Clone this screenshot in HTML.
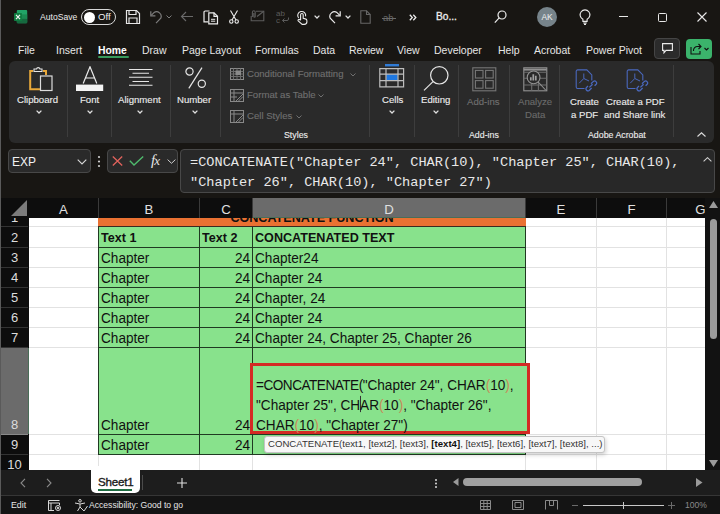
<!DOCTYPE html>
<html><head><meta charset="utf-8">
<style>
*{margin:0;padding:0;box-sizing:border-box}
html,body{width:720px;height:514px;overflow:hidden;background:#181613;font-family:"Liberation Sans",sans-serif;color:#e8e8e8}
.a{position:absolute}
.t{position:absolute;white-space:nowrap;line-height:1}
#win{position:absolute;left:0;top:0;width:720px;height:514px;overflow:hidden}
.tab{position:absolute;top:44px;font-size:10.5px;color:#e6e6e6;white-space:nowrap;line-height:12px}
.rib{position:absolute;left:9px;top:61px;width:705px;height:82px;background:#2a2a2a;border-radius:6px}
.sep{position:absolute;width:1px;background:#3d3d3d;top:65px;height:72px}
.rl{position:absolute;font-size:9.6px;color:#ececec;-webkit-text-stroke:0.12px currentColor;white-space:nowrap;line-height:12px;text-align:center}
.dim{color:#7a7a7a}
.chev{position:absolute;width:5px;height:5px;border-right:1px solid #cfcfcf;border-bottom:1px solid #cfcfcf;transform:rotate(45deg)}
/* grid */
.ch{position:absolute;top:198px;height:20px;background:#0d0d0d;color:#e0e0e0;font-size:13.2px;text-align:center;line-height:23px}
.rh{position:absolute;left:1px;width:27px;background:#0d0d0d;color:#dcdcdc;font-size:13px;text-align:center;border-bottom:1px solid #333;line-height:19px;display:flex;align-items:flex-end;justify-content:center}
.cell{position:absolute;font-size:13.6px;color:#111;white-space:nowrap;line-height:20px;margin-top:1px;transform:scaleY(1.08);transform-origin:0 14.7px}
.cell.b{font-weight:bold;font-size:12.6px;margin-top:0}
.cell.r{text-align:right}
.p{color:#c98a5a}
</style></head><body><div id="win">
<!-- left window border -->
<div class="a" style="left:0;top:0;width:1px;height:514px;background:#5a5a5a"></div>

<!-- ===== TITLE BAR ===== -->
<svg class="a" style="left:13px;top:9px" width="16" height="17" viewBox="0 0 16 17">
 <rect x="3.8" y="1" width="10.4" height="13.2" rx="1" fill="#21a366"/>
 <rect x="3.8" y="5.4" width="10.4" height="4.4" fill="#1b8a52"/>
 <rect x="3.8" y="9.8" width="10.4" height="4.4" rx="1" fill="#16693f"/>
 <rect x="1" y="4" width="8" height="8" rx="0.8" fill="#107c41"/>
 <path d="M3 5.8 L7 10.2 M7 5.8 L3 10.2" stroke="#f4f4f4" stroke-width="1.2"/>
</svg>
<div class="t" style="left:40px;top:13px;font-size:8.6px;color:#ececec">AutoSave</div>
<div class="a" style="left:81px;top:9px;width:35px;height:16px;border:1.2px solid #d8d8d8;border-radius:8px"></div>
<div class="a" style="left:84px;top:11.5px;width:11px;height:11px;background:#fff;border-radius:50%"></div>
<div class="t" style="left:98px;top:12px;font-size:9.6px;color:#f0f0f0">Off</div>
<!-- save -->
<svg class="a" style="left:125px;top:9px" width="16" height="16" viewBox="0 0 16 16" fill="none" stroke="#e6e6e6" stroke-width="1.2">
 <path d="M1.5 1.5 H11.5 L14.5 4.5 V14.5 H1.5 Z"/><path d="M4 1.5 V5.5 H11 V1.5"/><path d="M4 14.5 V9 H12 V14.5"/>
</svg>
<!-- undo dim -->
<svg class="a" style="left:149px;top:10px" width="14" height="14" viewBox="0 0 14 14" fill="none" stroke="#7d7d7d" stroke-width="1.2">
 <path d="M7 13.2 L11.8 8.2 A4.6 4.6 0 0 0 5 2.6 L2.4 5.2"/><path d="M1.8 1.2 V5.8 H6.4"/>
</svg>
<svg class="a" style="left:166px;top:15px" width="6" height="4"><path d="M0.5 0.5 L3 3 L5.5 0.5" stroke="#7d7d7d" fill="none"/></svg>
<!-- back arrow dim -->
<svg class="a" style="left:180px;top:10px" width="14" height="13" viewBox="0 0 14 13" fill="none" stroke="#6a6a6a" stroke-width="1.1">
 <path d="M13 6.5 H1.5 M6 2 L1.5 6.5 L6 11"/>
</svg>
<!-- copy -->
<svg class="a" style="left:203px;top:10px" width="16" height="15" viewBox="0 0 16 15" fill="none" stroke="#ececec" stroke-width="1.2">
 <path d="M6.5 1 H2.2 A1.2 1.2 0 0 0 1 2.2 V11.8 H5"/>
 <path d="M5.8 2.8 H11 L14.5 6.3 V13.8 H5.8 Z" fill="#181613"/><path d="M11 2.8 V6.3 H14.5"/><path d="M8 9.3 H12.2 M8 11.2 H12.2" stroke-width="1"/>
</svg>
<!-- scissors -->
<svg class="a" style="left:229px;top:10px" width="10" height="14" viewBox="0 0 10 14" fill="none" stroke="#ececec" stroke-width="1.1">
 <path d="M1.5 0.5 L7 10 M8.5 0.5 L3 10"/><circle cx="2.3" cy="11.5" r="1.7"/><circle cx="7.7" cy="11.5" r="1.7"/>
</svg>
<!-- mail dim -->
<svg class="a" style="left:250px;top:10px" width="15" height="12" viewBox="0 0 15 12" fill="none" stroke="#5c5c5c" stroke-width="1.1">
 <path d="M1.2 6 V10.8 H13.8 V1.2 H6"/><path d="M13.8 1.2 L7 6.5"/><path d="M2.4 7 V2.2 A1.4 1.4 0 0 1 5.2 2.2 V6.5 A0.7 0.7 0 0 1 3.8 6.5 V3"/>
</svg>
<!-- abc dim -->
<svg class="a" style="left:276px;top:9px" width="14" height="14" viewBox="0 0 14 14" fill="none" stroke="#5c5c5c" stroke-width="1">
 <text x="0" y="7" font-size="8" font-family="Liberation Sans" fill="#5c5c5c" stroke="none">ab</text>
 <text x="0" y="13.8" font-size="8" font-family="Liberation Sans" fill="#5c5c5c" stroke="none">c</text>
 <path d="M12.5 8.5 V10 A1.5 1.5 0 0 1 11 11.5 H6.5 M8.5 9.5 L6.5 11.5 L8.5 13.5"/>
</svg>
<!-- touch -->
<svg class="a" style="left:296px;top:10px" width="12" height="15" viewBox="0 0 12 15" fill="none" stroke="#ececec" stroke-width="1.1">
 <path d="M2.6 8 A4 4 0 1 1 9.6 6.4"/>
 <path d="M4.6 10 V4.8 A1.3 1.3 0 0 1 7.2 4.8 V8.4 L9.4 8.9 A1.8 1.8 0 0 1 10.9 10.7 V11.8 A2.6 2.6 0 0 1 8.3 14.4 H6.2 L2.2 10.9 A1 1 0 0 1 3.6 9.5 L4.6 10.4"/>
</svg>
<svg class="a" style="left:314px;top:15px" width="6" height="4"><path d="M0.6 0.6 L3 3 L5.4 0.6" stroke="#e0e0e0" fill="none" stroke-width="1.3"/></svg>
<!-- redo -->
<svg class="a" style="left:328px;top:10px" width="14" height="14" viewBox="0 0 14 14" fill="none" stroke="#ececec" stroke-width="1.2">
 <path d="M7 13.2 L2.2 8.2 A4.6 4.6 0 0 1 9 2.6 L11.6 5.2"/><path d="M12.2 1.2 V5.8 H7.6"/>
</svg>
<svg class="a" style="left:345px;top:15px" width="6" height="4"><path d="M0.6 0.6 L3 3 L5.4 0.6" stroke="#e0e0e0" fill="none" stroke-width="1.3"/></svg>
<!-- doc dim -->
<svg class="a" style="left:360px;top:10px" width="11" height="14" viewBox="0 0 11 14" fill="none" stroke="#666" stroke-width="1.1">
 <path d="M0.8 0.8 H6.5 L10.2 4.5 V13.2 H0.8 Z"/><path d="M6.5 0.8 V4.5 H10.2"/>
</svg>
<!-- ab strike dim -->
<div class="t" style="left:383px;top:13px;font-size:9.5px;color:#6a6a6a">ab</div>
<div class="a" style="left:382px;top:18px;width:14px;height:1px;background:#6a6a6a"></div>
<svg class="a" style="left:409px;top:14px" width="8" height="7"><path d="M0.8 0.8 L3.3 3.5 L0.8 6.2 M4.3 0.8 L6.8 3.5 L4.3 6.2" stroke="#ececec" fill="none" stroke-width="1.3"/></svg>
<div class="t" style="left:436px;top:12px;font-size:10.2px;color:#ececec;-webkit-text-stroke:0.3px #ececec">Bo...</div>
<!-- search -->
<svg class="a" style="left:494px;top:10px" width="13" height="14" viewBox="0 0 13 14" fill="none" stroke="#ececec" stroke-width="1.2">
 <circle cx="8" cy="5" r="4"/><path d="M5.2 7.9 L0.8 12.6"/>
</svg>
<!-- avatar -->
<div class="a" style="left:537px;top:7px;width:20px;height:20px;border-radius:50%;background:#76838a"></div>
<div class="t" style="left:537px;width:20px;text-align:center;top:13px;font-size:8.4px;color:#f0f0f0">AK</div>
<!-- bulb -->
<svg class="a" style="left:579px;top:9px" width="12" height="16" viewBox="0 0 12 16" fill="none" stroke="#ececec" stroke-width="1.1">
 <path d="M3.9 12.4 V10.2 A4.9 4.9 0 1 1 8.1 10.2 V12.4 Z"/><path d="M4.2 14 H7.8 M5 15.4 H7"/>
</svg>
<!-- window controls -->
<div class="a" style="left:619px;top:16px;width:9px;height:1px;background:#e8e8e8"></div>
<div class="a" style="left:658px;top:13px;width:9px;height:9px;border:1.2px solid #e8e8e8;border-radius:1.5px"></div>
<svg class="a" style="left:697px;top:12px" width="10" height="10" viewBox="0 0 10 10"><path d="M0.5 0.5 L9.5 9.5 M9.5 0.5 L0.5 9.5" stroke="#e8e8e8" stroke-width="1.1"/></svg>

<!-- ===== TABS ===== -->
<div class="tab" style="left:18px">File</div>
<div class="tab" style="left:56px">Insert</div>
<div class="tab" style="left:98px;color:#fff;font-size:10.4px;font-weight:bold;top:44.5px">Home</div>
<div class="a" style="left:98px;top:56px;width:31px;height:2px;background:#389a5c;border-radius:1px"></div>
<div class="tab" style="left:142px">Draw</div>
<div class="tab" style="left:182px">Page Layout</div>
<div class="tab" style="left:255px">Formulas</div>
<div class="tab" style="left:313px">Data</div>
<div class="tab" style="left:349px">Review</div>
<div class="tab" style="left:397px">View</div>
<div class="tab" style="left:434px">Developer</div>
<div class="tab" style="left:498px">Help</div>
<div class="tab" style="left:534px">Acrobat</div>
<div class="tab" style="left:586px">Power Pivot</div>
<div class="a" style="left:654px;top:38px;width:26px;height:21px;background:#2b2b2b;border:1px solid #454545;border-radius:4px"></div>
<svg class="a" style="left:662px;top:43px" width="11" height="11" viewBox="0 0 11 11" fill="none" stroke="#ececec" stroke-width="1.1">
 <path d="M0.6 0.6 H10.4 V7.4 H4 L2 9.8 V7.4 H0.6 Z"/>
</svg>
<div class="a" style="left:686px;top:39px;width:26px;height:20px;background:#3bb36b;border-radius:4px"></div>
<svg class="a" style="left:690px;top:43px" width="20" height="12" viewBox="0 0 20 12" fill="none" stroke="#111" stroke-width="1.1">
 <path d="M1 4 V11 H10 V8"/><path d="M3.5 8 A4 4 0 0 1 8 3.5 H10.5 M8.5 1 L11 3.5 L8.5 6"/><path d="M14.5 5 L16.5 7 L18.5 5"/>
</svg>

<!-- ===== RIBBON ===== -->
<div class="rib"></div>
<!-- Clipboard -->
<svg class="a" style="left:29px;top:65px" width="25" height="27" viewBox="0 0 25 27" fill="none">
 <path d="M4 6 H1.2 V24.2 H11" stroke="#e8a83a" stroke-width="2"/>
 <path d="M14 6 H17 V10" stroke="#e8a83a" stroke-width="2"/>
 <path d="M5 6.5 V4 H7.5 A1.8 1.8 0 0 1 11 4 H13 V6.5 Z" stroke="#e6e6e6" stroke-width="1.1"/>
 <rect x="11.5" y="11" width="11.5" height="14.5" stroke="#dcdcdc" stroke-width="1.2"/>
</svg>
<div class="rl" style="left:17px;top:94px">Clipboard</div>
<svg class="a" style="left:36px;top:110px" width="6" height="4"><path d="M0.6 0.6 L3 3 L5.4 0.6" stroke="#e0e0e0" fill="none" stroke-width="1.3"/></svg>
<div class="sep" style="left:67px"></div>
<!-- Font -->
<svg class="a" style="left:76px;top:66px" width="28" height="26" viewBox="0 0 28 26" fill="none">
 <path d="M7.2 17.5 L14 0.8 L20.8 17.5 M9.6 12 H18.4" stroke="#ececec" stroke-width="1.2"/>
 <rect x="0" y="18.6" width="27.2" height="6.4" fill="#f4f4f4"/>
</svg>
<div class="rl" style="left:80px;top:94px">Font</div>
<svg class="a" style="left:87px;top:110px" width="6" height="4"><path d="M0.6 0.6 L3 3 L5.4 0.6" stroke="#e0e0e0" fill="none" stroke-width="1.3"/></svg>
<div class="sep" style="left:111px"></div>
<!-- Alignment -->
<svg class="a" style="left:129px;top:68px" width="24" height="19" viewBox="0 0 24 19" stroke="#e6e6e6" stroke-width="1.1">
 <path d="M0 1.5 H23.5 M3.5 5.3 H20 M0 9.3 H23.5 M3.5 13.5 H20 M0 17.3 H23.5"/>
</svg>
<div class="rl" style="left:118px;top:94px">Alignment</div>
<svg class="a" style="left:137px;top:110px" width="6" height="4"><path d="M0.6 0.6 L3 3 L5.4 0.6" stroke="#e0e0e0" fill="none" stroke-width="1.3"/></svg>
<div class="sep" style="left:170px"></div>
<!-- Number -->
<svg class="a" style="left:185px;top:67px" width="22" height="22" viewBox="0 0 22 22" fill="none" stroke="#e6e6e6" stroke-width="1.2">
 <circle cx="4.5" cy="4.5" r="3.6"/><circle cx="16.8" cy="16.8" r="3.6"/><path d="M17 0.6 L3.8 21.4"/>
</svg>
<div class="rl" style="left:177px;top:94px">Number</div>
<svg class="a" style="left:192px;top:110px" width="6" height="4"><path d="M0.6 0.6 L3 3 L5.4 0.6" stroke="#e0e0e0" fill="none" stroke-width="1.3"/></svg>
<div class="sep" style="left:220px"></div>
<!-- Styles -->
<svg class="a" style="left:230px;top:68px" width="14" height="12" viewBox="0 0 14 12" fill="none" stroke="#8a8a8a" stroke-width="1">
 <rect x="0.5" y="0.5" width="13" height="11"/><path d="M0.5 3.5 H13.5 M0.5 6 H13.5 M0.5 8.5 H13.5 M3.5 0.5 V11.5 M7 0.5 V11.5 M10.5 0.5 V11.5" stroke="#6a6a6a"/><rect x="6" y="3" width="4.5" height="3.5" fill="#8a8a8a"/>
</svg>
<div class="rl dim" style="left:247px;top:68px;color:#707070">Conditional Formatting</div>
<svg class="a" style="left:350px;top:73px" width="6" height="4"><path d="M0.5 0.5 L3 3 L5.5 0.5" stroke="#707070" fill="none"/></svg>
<svg class="a" style="left:230px;top:89px" width="14" height="13" viewBox="0 0 14 13" fill="none" stroke="#888" stroke-width="1">
 <rect x="0.5" y="0.5" width="13" height="12"/><path d="M0.5 4 H13.5 M4 0.5 V12.5 M0.5 8 H7"/><path d="M6 12 L13 5 M8.5 12 L13 7.5" />
</svg>
<div class="rl dim" style="left:247px;top:89px;color:#707070">Format as Table</div>
<svg class="a" style="left:318px;top:94px" width="6" height="4"><path d="M0.5 0.5 L3 3 L5.5 0.5" stroke="#707070" fill="none"/></svg>
<svg class="a" style="left:230px;top:110px" width="14" height="13" viewBox="0 0 14 13" fill="none" stroke="#888" stroke-width="1">
 <rect x="0.5" y="0.5" width="13" height="12"/><path d="M0.5 4 H13.5 M4 0.5 V12.5"/><path d="M6 12 L13 5 M8.5 12 L13 7.5" />
</svg>
<div class="rl dim" style="left:247px;top:110px;color:#707070">Cell Styles</div>
<svg class="a" style="left:296px;top:115px" width="6" height="4"><path d="M0.5 0.5 L3 3 L5.5 0.5" stroke="#707070" fill="none"/></svg>
<div class="rl" style="left:284px;top:129px;font-size:8.8px">Styles</div>
<div class="sep" style="left:369px"></div>
<!-- Cells -->
<svg class="a" style="left:379px;top:64px" width="26" height="24" viewBox="0 0 26 24" fill="none">
 <rect x="6" y="0" width="14" height="2.4" fill="#2f7bd6"/>
 <rect x="7.2" y="10.2" width="11.6" height="6.4" fill="#1f78e0"/>
 <path d="M0.8 4.6 H24.6 V22.8 H0.8 Z M0.8 10.2 H24.6 M0.8 16.6 H24.6 M7 4.6 V22.8 M19 4.6 V22.8" stroke="#bdbdbd" stroke-width="1.2"/>
</svg>
<div class="rl" style="left:382px;top:94px">Cells</div>
<svg class="a" style="left:389px;top:110px" width="6" height="4"><path d="M0.6 0.6 L3 3 L5.4 0.6" stroke="#e0e0e0" fill="none" stroke-width="1.3"/></svg>
<div class="sep" style="left:414px"></div>
<!-- Editing -->
<svg class="a" style="left:423px;top:66px" width="26" height="25" viewBox="0 0 26 25" fill="none" stroke="#e6e6e6" stroke-width="1.2">
 <circle cx="16.3" cy="9.3" r="8.7"/><path d="M10 15.6 L1 24.4"/>
</svg>
<div class="rl" style="left:421px;top:94px">Editing</div>
<svg class="a" style="left:433px;top:110px" width="6" height="4"><path d="M0.6 0.6 L3 3 L5.4 0.6" stroke="#e0e0e0" fill="none" stroke-width="1.3"/></svg>
<div class="sep" style="left:458px"></div>
<!-- Add-ins -->
<svg class="a" style="left:472px;top:67px" width="25" height="25" viewBox="0 0 25 25" fill="none" stroke="#777" stroke-width="1.1">
 <rect x="0.8" y="0.8" width="23" height="23"/><rect x="3.4" y="3.4" width="7.6" height="7.6"/><rect x="13.6" y="3.4" width="7.6" height="7.6"/><rect x="3.4" y="13.6" width="7.6" height="7.6"/><rect x="13.6" y="13.6" width="7.6" height="7.6"/>
</svg>
<div class="rl dim" style="left:467px;top:96px;color:#707070">Add-ins</div>
<div class="rl" style="left:469px;top:129px;font-size:8.8px">Add-ins</div>
<div class="sep" style="left:509px"></div>
<!-- Analyze -->
<svg class="a" style="left:523px;top:67px" width="25" height="25" viewBox="0 0 25 25" fill="none" stroke="#939393" stroke-width="1.1">
 <rect x="0.8" y="0.8" width="23" height="23"/><path d="M0.8 2.6 H23.8" stroke-width="2"/><path d="M0.8 5.2 H23.8 M0.8 11.3 H23.8 M0.8 18 H23.8 M8.7 5 V23.8 M15.4 5 V23.8" stroke="#6e6e6e"/>
 <circle cx="10.6" cy="10.4" r="6.4" fill="#2a2a2a"/><path d="M15.2 15 L22.6 23"/>
 <path d="M7.8 13.6 V10.2 M10.3 13.6 V7.2 M12.8 13.6 V8.8" stroke-width="1.7" stroke="#a0a0a0"/>
</svg>
<div class="rl dim" style="left:518px;top:96px;color:#6a6a6a">Analyze</div>
<div class="rl dim" style="left:525px;top:109px;color:#6a6a6a">Data</div>
<div class="sep" style="left:559px"></div>
<!-- Acrobat -->
<svg class="a" style="left:575px;top:69px" width="23" height="24" viewBox="0 0 23 24" fill="none" stroke="#4a68bd" stroke-width="1.1">
 <path d="M9.5 19.5 H2.6 A1.4 1.4 0 0 1 1.2 18.1 V2.3 A1.4 1.4 0 0 1 2.6 0.9 H11.8 L16.8 5.9 V11.5"/>
 <path d="M8.8 4.5 V9.5 L4.2 14.2 M8.8 9.5 L14 12" stroke-width="1"/>
 <path d="M13 17 L11.4 18.6 A2 2 0 0 0 14.2 21.4 L16.6 19 M16 14.8 L18.4 12.4 A2 2 0 0 1 21.2 15.2 L19.6 16.8 M14.4 18.4 L17.6 15.2" stroke-width="1.3"/>
</svg>
<div class="rl" style="left:570px;top:96px">Create</div>
<div class="rl" style="left:571px;top:109px">a PDF</div>
<svg class="a" style="left:626px;top:69px" width="23" height="24" viewBox="0 0 23 24" fill="none" stroke="#4a68bd" stroke-width="1.1">
 <path d="M9.5 19.5 H2.6 A1.4 1.4 0 0 1 1.2 18.1 V2.3 A1.4 1.4 0 0 1 2.6 0.9 H11.8 L16.8 5.9 V11.5"/>
 <path d="M8.8 4.5 V9.5 L4.2 14.2 M8.8 9.5 L14 12" stroke-width="1"/>
 <path d="M13 17 L11.4 18.6 A2 2 0 0 0 14.2 21.4 L16.6 19 M16 14.8 L18.4 12.4 A2 2 0 0 1 21.2 15.2 L19.6 16.8 M14.4 18.4 L17.6 15.2" stroke-width="1.3"/>
</svg>
<div class="rl" style="left:606px;top:96px">Create a PDF</div>
<div class="rl" style="left:604px;top:109px">and Share link</div>
<div class="rl" style="left:588px;top:129px;font-size:8.8px">Adobe Acrobat</div>
<div class="sep" style="left:673px"></div>
<svg class="a" style="left:697px;top:132px" width="9" height="5"><path d="M0.5 4.5 L4.5 0.8 L8.5 4.5" stroke="#dcdcdc" fill="none" stroke-width="1.1"/></svg>

<!-- ===== FORMULA BAR ===== -->
<div class="a" style="left:8px;top:149px;width:83px;height:24px;background:#2a2a2a;border:1px solid #484848;border-radius:4px"></div>
<div class="t" style="left:12px;top:156px;font-size:12px;color:#f2f2f2">EXP</div>
<svg class="a" style="left:77px;top:159px" width="10" height="6"><path d="M0.7 0.7 L5 5 L9.3 0.7" stroke="#d8d8d8" fill="none" stroke-width="1.1"/></svg>
<svg class="a" style="left:97px;top:155px" width="4" height="13"><circle cx="2" cy="2" r="1.1" fill="#d0d0d0"/><circle cx="2" cy="6.5" r="1.1" fill="#d0d0d0"/><circle cx="2" cy="11" r="1.1" fill="#d0d0d0"/></svg>
<div class="a" style="left:107px;top:149px;width:71px;height:24px;background:#2a2a2a;border:1px solid #484848;border-radius:4px"></div>
<svg class="a" style="left:112px;top:156px" width="11" height="10"><path d="M0.8 0.5 L10.2 9.5 M10.2 0.5 L0.8 9.5" stroke="#e0625c" stroke-width="1.3"/></svg>
<svg class="a" style="left:129px;top:156px" width="15" height="10"><path d="M0.8 4.8 L5 9 L14.2 0.6" stroke="#4fba6d" stroke-width="1.4" fill="none"/></svg>
<div class="t" style="left:151px;top:153px;font-size:15px;font-family:'Liberation Serif',serif;font-style:italic;color:#e6e6e6;letter-spacing:-1px">f<span style="font-size:13px">x</span></div>
<svg class="a" style="left:167px;top:159px" width="9" height="5"><path d="M0.6 0.6 L4.5 4.3 L8.4 0.6" stroke="#cfcfcf" fill="none" stroke-width="1"/></svg>
<div class="a" style="left:180px;top:149px;width:535px;height:44px;background:#282828;border:1px solid #484848;border-radius:4px"></div>
<div class="t" style="left:190px;top:153px;font-size:13.6px;font-family:'Liberation Mono',monospace;color:#e8e8e8;line-height:20px">=CONCATENATE("Chapter 24", CHAR(10), "Chapter 25", CHAR(10),<br>"Chapter 26", CHAR(10), "Chapter 27")</div>
<svg class="a" style="left:703px;top:157px" width="9" height="5"><path d="M0.6 4.4 L4.5 0.7 L8.4 4.4" stroke="#cfcfcf" fill="none" stroke-width="1.1"/></svg>

<!-- ===== GRID ===== -->
<div class="a" style="left:0;top:0;width:705px;height:470px;overflow:hidden">
<div class="a" style="left:1px;top:218px;width:704px;height:252px;background:#fff"></div>
<!-- light gridlines -->
<div class="a" style="left:29px;top:226px;width:676px;height:1px;background:#e2e2e2"></div>
<div class="a" style="left:29px;top:247px;width:676px;height:1px;background:#e2e2e2"></div>
<div class="a" style="left:29px;top:267px;width:676px;height:1px;background:#e2e2e2"></div>
<div class="a" style="left:29px;top:287px;width:676px;height:1px;background:#e2e2e2"></div>
<div class="a" style="left:29px;top:307px;width:676px;height:1px;background:#e2e2e2"></div>
<div class="a" style="left:29px;top:327px;width:676px;height:1px;background:#e2e2e2"></div>
<div class="a" style="left:29px;top:347px;width:676px;height:1px;background:#e2e2e2"></div>
<div class="a" style="left:29px;top:434px;width:676px;height:1px;background:#e2e2e2"></div>
<div class="a" style="left:29px;top:454px;width:676px;height:1px;background:#e2e2e2"></div>
<div class="a" style="left:98px;top:218px;width:1px;height:252px;background:#e2e2e2"></div>
<div class="a" style="left:199px;top:218px;width:1px;height:252px;background:#e2e2e2"></div>
<div class="a" style="left:252px;top:218px;width:1px;height:252px;background:#e2e2e2"></div>
<div class="a" style="left:525px;top:218px;width:1px;height:252px;background:#e2e2e2"></div>
<div class="a" style="left:596px;top:218px;width:1px;height:252px;background:#e2e2e2"></div>
<div class="a" style="left:666px;top:218px;width:1px;height:252px;background:#e2e2e2"></div>
<!-- orange title row -->
<div class="a" style="left:98px;top:218px;width:428px;height:9px;background:#e97132;border-bottom:1px solid #3a2a20;overflow:hidden">
  <div class="t" style="left:0;width:428px;text-align:center;top:-6px;font-size:12.6px;font-weight:bold;color:#111">CONCATENATE FUNCTION</div>
</div>
<!-- green table -->
<div class="a" style="left:98px;top:227px;width:428px;height:228px;background:#88e28c;border:1px solid #203a22;border-top:none"></div>
<div class="a" style="left:99px;top:247px;width:426px;height:1px;background:#203a22"></div>
<div class="a" style="left:99px;top:267px;width:426px;height:1px;background:#203a22"></div>
<div class="a" style="left:99px;top:287px;width:426px;height:1px;background:#203a22"></div>
<div class="a" style="left:99px;top:307px;width:426px;height:1px;background:#203a22"></div>
<div class="a" style="left:99px;top:327px;width:426px;height:1px;background:#203a22"></div>
<div class="a" style="left:99px;top:347px;width:426px;height:1px;background:#203a22"></div>
<div class="a" style="left:99px;top:434px;width:426px;height:1px;background:#203a22"></div>
<div class="a" style="left:199px;top:227px;width:1px;height:227px;background:#203a22"></div>
<div class="a" style="left:252px;top:227px;width:1px;height:227px;background:#203a22"></div>
<!-- cell text -->
<div class="cell b" style="left:101px;top:228px">Text 1</div>
<div class="cell b" style="left:202px;top:228px">Text 2</div>
<div class="cell b" style="left:255px;top:228px">CONCATENATED TEXT</div>
<div class="cell" style="left:101px;top:248px">Chapter</div>
<div class="cell r" style="left:200px;width:50px;top:248px">24</div>
<div class="cell" style="left:255px;top:248px">Chapter24</div>
<div class="cell" style="left:101px;top:268px">Chapter</div>
<div class="cell r" style="left:200px;width:50px;top:268px">24</div>
<div class="cell" style="left:255px;top:268px">Chapter 24</div>
<div class="cell" style="left:101px;top:288px">Chapter</div>
<div class="cell r" style="left:200px;width:50px;top:288px">24</div>
<div class="cell" style="left:255px;top:288px">Chapter, 24</div>
<div class="cell" style="left:101px;top:308px">Chapter</div>
<div class="cell r" style="left:200px;width:50px;top:308px">24</div>
<div class="cell" style="left:255px;top:308px">Chapter 24</div>
<div class="cell" style="left:101px;top:328px">Chapter</div>
<div class="cell r" style="left:200px;width:50px;top:328px">24</div>
<div class="cell" style="left:255px;top:328px">Chapter 24, Chapter 25, Chapter 26</div>
<div class="cell" style="left:101px;top:415px">Chapter</div>
<div class="cell r" style="left:200px;width:50px;top:415px">24</div>
<div class="cell" style="left:101px;top:435px">Chapter</div>
<div class="cell r" style="left:200px;width:50px;top:435px">24</div>
<!-- editor red box -->
<div class="a" style="left:250px;top:363px;width:280px;height:71px;border:3px solid #d42a24;background:#88e28c"></div>
<div class="cell" style="left:256px;top:375px"><span style="letter-spacing:-0.5px">=CONCATENATE(</span>"Chapter 24", CHAR<span class="p">(</span>10<span class="p">)</span>,</div>
<div class="cell" style="left:256px;top:395px">"Chapter 25", CH<span style="display:inline-block;width:1px;height:15px;background:#333;vertical-align:-2px;margin:0 -0.5px"></span>AR<span class="p">(</span>10<span class="p">)</span>, "Chapter 26",</div>
<div class="cell" style="left:256px;top:415px">CHAR<span class="p">(</span>10<span class="p">)</span>, "Chapter 27")</div>
<!-- tooltip -->
<div class="a" style="left:264px;top:436px;width:341px;height:17px;background:#f7f7f7;border:1px solid #c4c4c4;border-radius:3px;box-shadow:1px 2px 4px rgba(0,0,0,0.18)"></div>
<div class="t" style="left:268px;top:439px;font-size:9.6px;color:#333">CONCATENATE(text1, [text2], [text3], <b style="color:#111">[text4]</b>, [text5], [text6], [text7], [text8], ...)</div>
<!-- headers -->
<div class="a" style="left:1px;top:198px;width:704px;height:20px;background:#0d0d0d"></div>
<svg class="a" style="left:11px;top:200px" width="16" height="16"><path d="M16 0 L16 16 L0 16 Z" fill="#7b7b7b"/></svg>
<div class="ch" style="left:29px;width:69px">A</div>
<div class="ch" style="left:99px;width:100px">B</div>
<div class="ch" style="left:200px;width:52px">C</div>
<div class="ch" style="left:253px;width:272px;background:#6b6b6b">D</div>
<div class="ch" style="left:526px;width:70px">E</div>
<div class="ch" style="left:597px;width:69px">F</div>
<div class="ch" style="left:667px;width:67px">G</div>
<div class="a" style="left:98px;top:198px;width:1px;height:20px;background:#3a3a3a"></div>
<div class="a" style="left:199px;top:198px;width:1px;height:20px;background:#3a3a3a"></div>
<div class="a" style="left:252px;top:198px;width:1px;height:20px;background:#3a3a3a"></div>
<div class="a" style="left:525px;top:198px;width:1px;height:20px;background:#3a3a3a"></div>
<div class="a" style="left:596px;top:198px;width:1px;height:20px;background:#3a3a3a"></div>
<div class="a" style="left:666px;top:198px;width:1px;height:20px;background:#3a3a3a"></div>
<div class="a" style="left:1px;top:218px;width:28px;height:252px;background:#0d0d0d"></div>
<div class="rh" style="top:218px;height:9px;overflow:hidden"><div style="position:absolute;left:0;width:27px;top:-10px;line-height:20px">1</div></div>
<div class="rh" style="top:227px;height:21px">2</div>
<div class="rh" style="top:248px;height:20px">3</div>
<div class="rh" style="top:268px;height:20px">4</div>
<div class="rh" style="top:288px;height:20px">5</div>
<div class="rh" style="top:308px;height:20px">6</div>
<div class="rh" style="top:328px;height:20px">7</div>
<div class="rh" style="top:348px;height:87px;background:#6b6b6b">8</div>
<div class="a" style="left:28px;top:348px;width:1px;height:86px;background:#4a6e58"></div>
<div class="a" style="left:1px;top:434px;width:27px;height:1px;background:#8a8a8a"></div>
<div class="a" style="left:253px;top:217px;width:272px;height:1px;background:#4a6e58"></div>
<div class="rh" style="top:435px;height:20px">9</div>
<div class="rh" style="top:455px;height:20px">10</div>
</div>
<!-- vertical scrollbar -->
<div class="a" style="left:705px;top:198px;width:15px;height:272px;background:#121212"></div>
<svg class="a" style="left:709px;top:201px" width="9" height="8"><path d="M0 7 L4.5 0 L9 7 Z" fill="#9a9a9a"/></svg>
<div class="a" style="left:710px;top:219px;width:7px;height:120px;background:#9b9b9b;border-radius:4px"></div>
<svg class="a" style="left:709px;top:460px" width="9" height="8"><path d="M0 0 L4.5 7 L9 0 Z" fill="#9a9a9a"/></svg>
<!-- ===== SHEET TABS / STATUS ===== -->
<div class="a" style="left:1px;top:470px;width:719px;height:26px;background:#1d1d1d"></div>
<div class="a" style="left:91px;top:466px;width:49px;height:27px;background:#fff;border-radius:0 0 5px 5px"></div>
<div class="a" style="left:86px;top:470px;width:5px;height:6px;background:#1d1d1d;border-top-right-radius:5px"></div>
<div class="a" style="left:140px;top:470px;width:5px;height:6px;background:#1d1d1d;border-top-left-radius:5px"></div>
<div class="t" style="left:98px;top:476px;font-size:11.6px;color:#1a1a1a;-webkit-text-stroke:0.35px #1a1a1a;letter-spacing:-0.2px">Sheet1</div>
<div class="a" style="left:98px;top:489px;width:34px;height:2px;background:#1f6e43"></div>
<div class="a" style="left:142px;top:475px;width:1px;height:15px;background:#4a4a4a"></div>
<svg class="a" style="left:177px;top:478px" width="10" height="10"><path d="M5 0 V10 M0 5 H10" stroke="#e0e0e0" stroke-width="1.1"/></svg>
<svg class="a" style="left:20px;top:478px" width="6" height="10"><path d="M5 0.8 L1 5 L5 9.2" stroke="#8a8a8a" fill="none" stroke-width="1.1"/></svg>
<svg class="a" style="left:46px;top:478px" width="6" height="10"><path d="M1 0.8 L5 5 L1 9.2" stroke="#8a8a8a" fill="none" stroke-width="1.1"/></svg>
<svg class="a" style="left:434px;top:479px" width="4" height="9"><circle cx="2" cy="1" r="1" fill="#d8d8d8"/><circle cx="2" cy="4.5" r="1" fill="#d8d8d8"/><circle cx="2" cy="8" r="1" fill="#d8d8d8"/></svg>
<svg class="a" style="left:453px;top:478px" width="6" height="8"><path d="M5.5 0 V8 L0 4 Z" fill="#9a9a9a"/></svg>
<div class="a" style="left:463px;top:478px;width:179px;height:8px;background:#a0a0a0;border-radius:4px"></div>
<svg class="a" style="left:696px;top:478px" width="7" height="9"><path d="M0 0 V9 L6.5 4.5 Z" fill="#9a9a9a"/></svg>
<!-- status bar -->
<div class="a" style="left:1px;top:495px;width:719px;height:1px;background:#363636"></div>
<div class="a" style="left:1px;top:496px;width:719px;height:18px;background:#141414"></div>
<div class="t" style="left:11px;top:501px;font-size:8.8px;color:#e6e6e6">Edit</div>
<svg class="a" style="left:48px;top:500px" width="14" height="11" viewBox="0 0 14 11" fill="none" stroke="#d8d8d8" stroke-width="1">
 <path d="M0.5 0.5 H11.5 M0.5 3 H11.5 V5 M0.5 0.5 V10.5 H6 M3 3 V10"/><circle cx="10" cy="8" r="2.5"/><circle cx="10" cy="8" r="0.8" fill="#d8d8d8"/>
</svg>
<svg class="a" style="left:74px;top:499px" width="14" height="13" viewBox="0 0 14 13" fill="none" stroke="#d8d8d8" stroke-width="1">
 <circle cx="6" cy="1.8" r="1.3"/><path d="M1 4 L6 5 L11 4 M6 5 V8 L3.5 12 M6 8 L8 10"/><path d="M8 10 L10 12 L13.5 7"/>
</svg>
<div class="t" style="left:89px;top:501px;font-size:8.6px;color:#e6e6e6">Accessibility: Good to go</div>
<svg class="a" style="left:480px;top:500px" width="11" height="10" viewBox="0 0 11 10" fill="none" stroke="#8a8a8a" stroke-width="1">
 <path d="M0.5 0.5 H10.5 V9.5 H0.5 Z M0.5 3.5 H10.5 M0.5 6.5 H10.5 M3.8 0.5 V9.5 M7.2 0.5 V9.5"/>
</svg>
<svg class="a" style="left:512px;top:500px" width="12" height="10" viewBox="0 0 12 10" fill="none" stroke="#8a8a8a" stroke-width="1">
 <path d="M0.5 0.5 H11.5 V9.5 H0.5 Z"/><path d="M3 2.5 H9 V7.5 H3 Z"/>
</svg>
<svg class="a" style="left:545px;top:500px" width="13" height="10" viewBox="0 0 13 10" fill="none" stroke="#8a8a8a" stroke-width="1">
 <path d="M0.5 9.5 V0.5 H12.5 V9.5 M4.5 0.5 V5.5 H8.5 V0.5"/>
</svg>
<div class="a" style="left:572px;top:505px;width:6px;height:1px;background:#6a6a6a"></div>
<div class="a" style="left:583px;top:505px;width:81px;height:1px;background:#c8c8c8"></div>
<div class="a" style="left:623px;top:502px;width:1px;height:7px;background:#c8c8c8"></div>
<svg class="a" style="left:668px;top:502px" width="7" height="7"><path d="M3.5 0 V7 M0 3.5 H7" stroke="#6a6a6a" stroke-width="1"/></svg>
<div class="t" style="left:685px;top:501px;font-size:8.6px;color:#8a8a8a">100%</div>
</div></body></html>
